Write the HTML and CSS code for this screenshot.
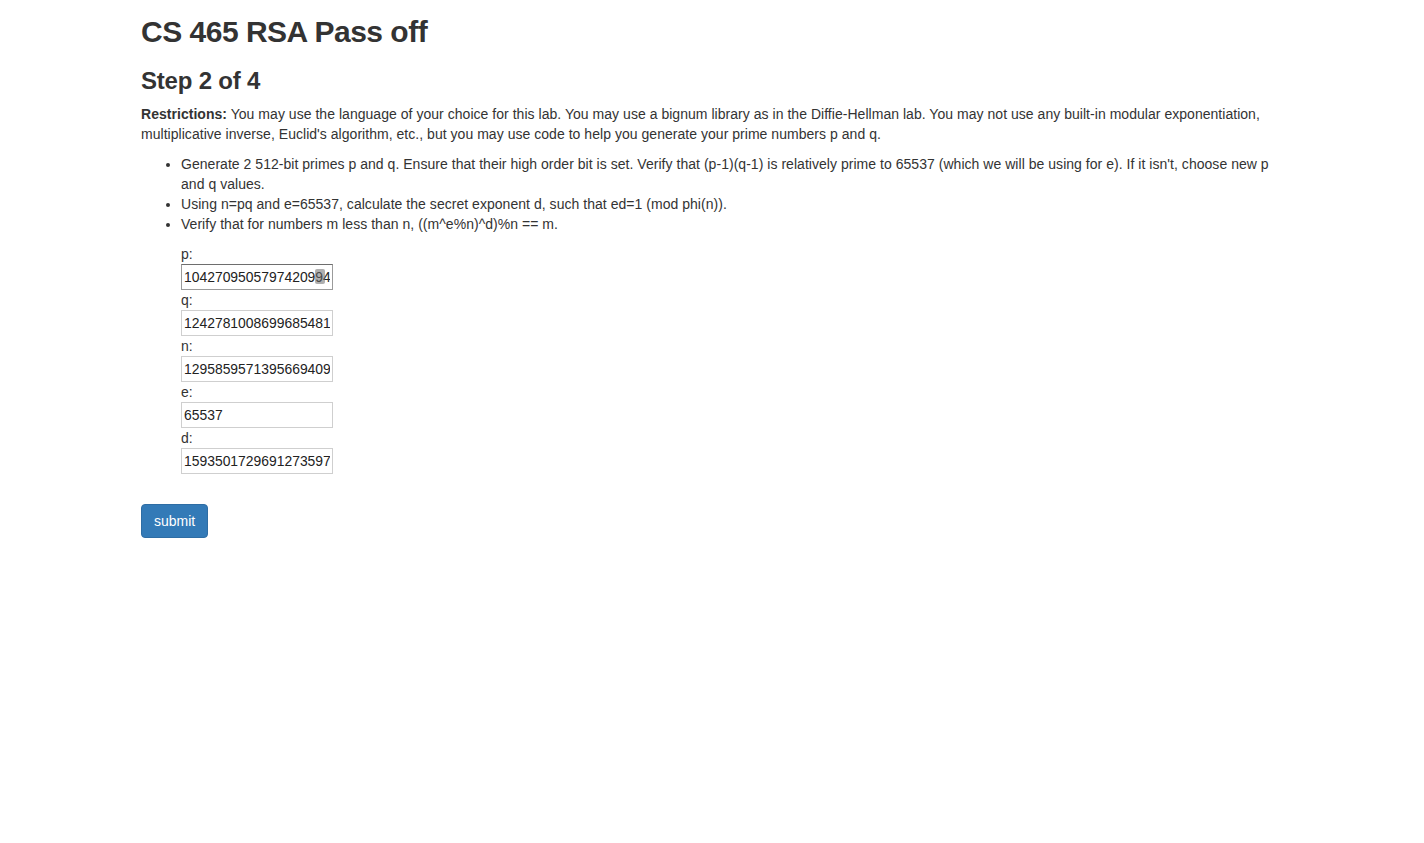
FILE: index.html
```html
<!DOCTYPE html>
<html>
<head>
<meta charset="utf-8">
<title>CS 465 RSA Pass off</title>
<link rel="stylesheet" href="styles.css">
</head>
<body>
<div class="container">
  <h1 class="title">CS 465 RSA Pass off</h1>
  <h2 class="step">Step 2 of 4</h2>
  <p class="intro"><strong>Restrictions:</strong> You may use the language of your choice for this lab. You may use a bignum library as in the Diffie-Hellman lab. You may not use any built-in modular exponentiation, multiplicative inverse, Euclid's algorithm, etc., but you may use code to help you generate your prime numbers p and q.</p>
  <ul class="tasks">
    <li>Generate 2 512-bit primes p and q. Ensure that their high order bit is set. Verify that (p-1)(q-1) is relatively prime to 65537 (which we will be using for e). If it isn't, choose new p and q values.</li>
    <li>Using n=pq and e=65537, calculate the secret exponent d, such that ed=1 (mod phi(n)).</li>
    <li>Verify that for numbers m less than n, ((m^e%n)^d)%n == m.</li>
  </ul>
  <form class="form">
    <div class="fields">
      <label class="lbl">p:</label>
      <div class="field-wrap">
        <input class="field focused" type="text" value="10427095057974209945">
        <span class="caret-box"></span>
      </div>
      <label class="lbl">q:</label>
      <input class="field" type="text" value="12427810086996854813">
      <label class="lbl">n:</label>
      <input class="field" type="text" value="12958595713956694091">
      <label class="lbl">e:</label>
      <input class="field" type="text" value="65537">
      <label class="lbl">d:</label>
      <input class="field" type="text" value="15935017296912735971">
    </div>
    <button class="btn-primary" type="button">submit</button>
  </form>
</div>
</body>
</html>
```
FILE: styles.css
```css
html, body {
  margin: 0;
  padding: 0;
  background: #fff;
}
body {
  font-family: "Liberation Sans", Arial, Helvetica, sans-serif;
  font-size: 14px;
  line-height: 20px;
  color: #333;
  letter-spacing: 0.035px;
}
.container {
  width: 1170px;
  margin: 0 auto;
  padding: 0 15px 0 14px;
  box-sizing: border-box;
}
.title {
  font-size: 30px;
  font-weight: 700;
  line-height: 33px;
  margin: 15px 0 10px;
  letter-spacing: -0.5px;
}
.step {
  font-size: 24px;
  font-weight: 700;
  line-height: 26px;
  margin: 20px 0 10px;
  letter-spacing: -0.2px;
}
.intro {
  margin: 0 0 10px;
}
.tasks {
  margin: 0 0 10px;
  padding-left: 40px;
}
.form {
  margin: 0;
}
.fields {
  margin-left: 40px;
  display: flex;
  flex-direction: column;
  align-items: flex-start;
}
.lbl {
  display: block;
  line-height: 20px;
}
.field-wrap {
  position: relative;
}
.field {
  box-sizing: border-box;
  width: 152px;
  height: 26px;
  margin: 0;
  padding: 1px 2px;
  border: 1px solid #cfcfcf;
  background: #fff;
  font-family: "Liberation Sans", Arial, sans-serif;
  font-size: 13.9px;
  color: #222;
  outline: none;
}
.field.focused {
  border-color: #9b9b9b;
  border-top-color: #6e6e6e;
}
.caret-box {
  position: absolute;
  left: 134px;
  top: 5px;
  width: 10px;
  height: 15px;
  background: rgba(110,110,110,0.55);
  border-radius: 2px;
}
.btn-primary {
  margin-top: 30px;
  display: inline-block;
  height: 34px;
  padding: 6px 12px;
  font-family: "Liberation Sans", Arial, sans-serif;
  font-size: 14px;
  font-weight: 400;
  line-height: 20px;
  color: #fff;
  background: #337ab7;
  border: 1px solid #2e6da4;
  border-radius: 4px;
}
```
